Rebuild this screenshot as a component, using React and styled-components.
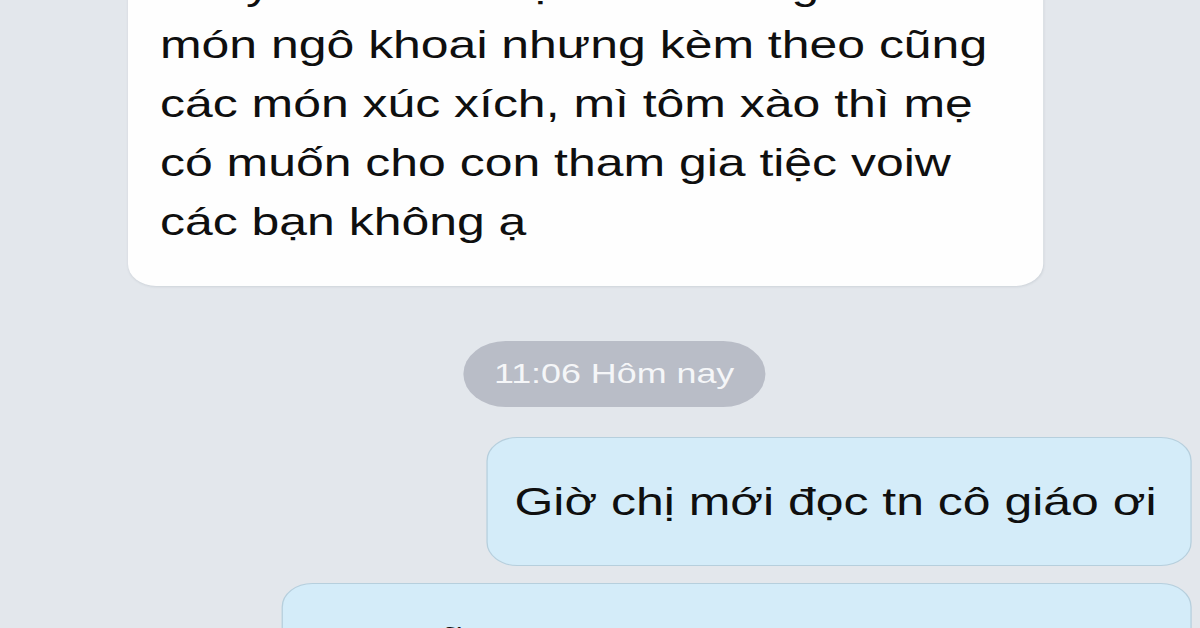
import React from 'react';
import styled, { createGlobalStyle } from 'styled-components';

const GlobalStyle = createGlobalStyle`
  html, body {
    margin: 0;
    padding: 0;
    background: #e3e7ec;
    overflow: hidden;
  }

  body {
    font-family: "Liberation Sans", Arial, sans-serif;
  }
`;

// the source is a phone screenshot stretched sideways, so the chat is laid
// out at phone width and widened once with scaleX
const Screen = styled.div`
  width: 1200px;
  height: 628px;
  overflow: hidden;
  background: #e3e7ec;
`;

const Thread = styled.div`
  width: 937.5px;
  margin-top: -79px;
  display: flex;
  flex-direction: column;
  transform: scaleX(1.28);
  transform-origin: 0 0;
`;

const Incoming = styled.div`
  box-sizing: border-box;
  width: 715px;
  margin-left: 100px;
  padding: 35px 25px;
  background: #fefefe;
  border-radius: 22px;
  box-shadow: 0 1px 2px rgba(60, 70, 90, 0.12);
  color: #0f0f0f;
  font-size: 39px;
  line-height: 59px;
  white-space: pre-line;
`;

const DateRow = styled.div`
  display: flex;
  justify-content: center;
  margin-top: 55px;
  padding-left: 22px;
`;

const DatePill = styled.div`
  display: flex;
  align-items: center;
  height: 66px;
  padding: 0 24px;
  border-radius: 33px;
  background: #b9bdc7;
  color: #f5f6f8;
  font-size: 28px;
`;

const Outgoing = styled.div`
  box-sizing: border-box;
  align-self: flex-end;
  width: ${props => (props.width ? `${props.width}px` : 'auto')};
  margin-top: ${props => props.gap}px;
  margin-right: 7px;
  padding: 34px 26px 34px 21px;
  background: #d4ecf9;
  border: 1px solid #b6cfdd;
  border-radius: 24px;
  color: #0f0f0f;
  font-size: 39px;
  line-height: 59px;
  white-space: pre-line;
`;

const question = [
  'Xin ý kiến của mẹ là ở trường có các',
  'món ngô khoai nhưng kèm theo cũng',
  'các món xúc xích, mì tôm xào thì mẹ',
  'có muốn cho con tham gia tiệc voiw',
  'các bạn không ạ',
].join('\n');

const App = () => {
  return (
    <Screen>
      <GlobalStyle />
      <Thread>
        <Incoming>{question}</Incoming>
        <DateRow>
          <DatePill>11:06 Hôm nay</DatePill>
        </DateRow>
        <Outgoing gap={30}>Giờ chị mới đọc tn cô giáo ơi</Outgoing>
        <Outgoing gap={17} width={711}>
          {'Nếu vẫn còn kịp thì cho cháu tham gia\nvới các bạn nhé cô'}
        </Outgoing>
      </Thread>
    </Screen>
  );
};

export default App;
